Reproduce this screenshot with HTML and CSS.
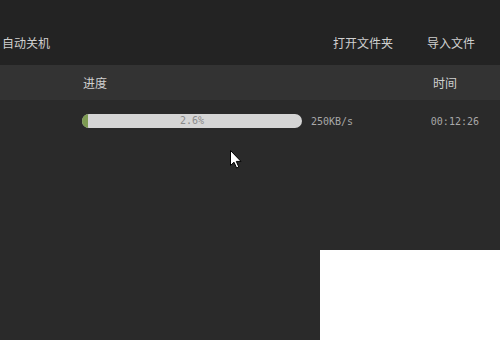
FILE: index.html
```html
<!DOCTYPE html>
<html lang="zh-CN">
<head>
    <meta charset="UTF-8">
    <title>下载列表</title>
    <link rel="stylesheet" href="styles.css">
</head>
<body>
    <div class="app">
        <div class="topbar">
            <span class="auto_off">自动关机</span>
            <div class="actions">
                <span class="open_dir">打开文件夹</span>
                <span class="import">导入文件</span>
            </div>
        </div>
        <div class="thead">
            <span class="col_prog">进度</span>
            <span class="col_time">时间</span>
        </div>
        <div class="list">
            <div class="row">
                <div class="bar">
                    <div class="bar_fill" style="width: 2.6%"></div>
                    <span class="bar_text">2.6%</span>
                </div>
                <span class="speed">250KB/s</span>
                <span class="time">00:12:26</span>
            </div>
        </div>
        <svg class="cursor" width="12" height="19" viewBox="0 0 12 19">
            <path d="M0.5 0.5 L0.5 15.5 L4 12.2 L6.6 18 L8.8 17 L6.3 11.4 L11 11.4 Z" fill="#fff" stroke="#000" stroke-width="1"/>
        </svg>
        <div class="popup"></div>
    </div>
</body>
</html>
```

FILE: styles.css
```css
*{
    margin: 0;
    padding: 0;
}
body{
    background: #2a2a2a;
    font-family: "Noto Sans CJK SC", "Liberation Sans", sans-serif;
    font-size: 12px;
}
.app{
    width: 500px;
    height: 340px;
    position: relative;
    overflow: hidden;
    background: #2a2a2a;
}
.topbar{
    height: 65px;
    background: #232323;
    display: flex;
    align-items: center;
    padding-top: 20px;
    box-sizing: border-box;
    color: #d0d0d0;
}
.auto_off{
    margin-left: 2px;
}
.actions{
    margin-left: auto;
    display: flex;
    gap: 34px;
    margin-right: 25px;
}
.thead{
    height: 35px;
    background: #333;
    display: flex;
    align-items: center;
    color: #d0d0d0;
}
.col_prog{
    margin-left: 83px;
}
.col_time{
    margin-left: auto;
    margin-right: 43px;
}
.row{
    display: flex;
    align-items: center;
    height: 42px;
    padding-left: 82px;
    font-family: "DejaVu Sans Mono", monospace;
    font-size: 10px;
    color: #a8a8a8;
}
.bar{
    width: 220px;
    height: 14px;
    border-radius: 7px;
    background: #d5d5d5;
    position: relative;
    overflow: hidden;
}
.bar_fill{
    height: 100%;
    min-width: 5px;
    background: #7d9a52;
}
.bar_text{
    position: absolute;
    left: 0;
    right: 0;
    top: 0;
    line-height: 14px;
    text-align: center;
    color: #8a8a8a;
}
.speed{
    margin-left: 9px;
}
.time{
    margin-left: auto;
    margin-right: 21px;
}
.cursor{
    position: absolute;
    left: 230px;
    top: 150px;
}
.popup{
    position: absolute;
    left: 320px;
    top: 250px;
    width: 180px;
    height: 90px;
    background: #fff;
}
```
